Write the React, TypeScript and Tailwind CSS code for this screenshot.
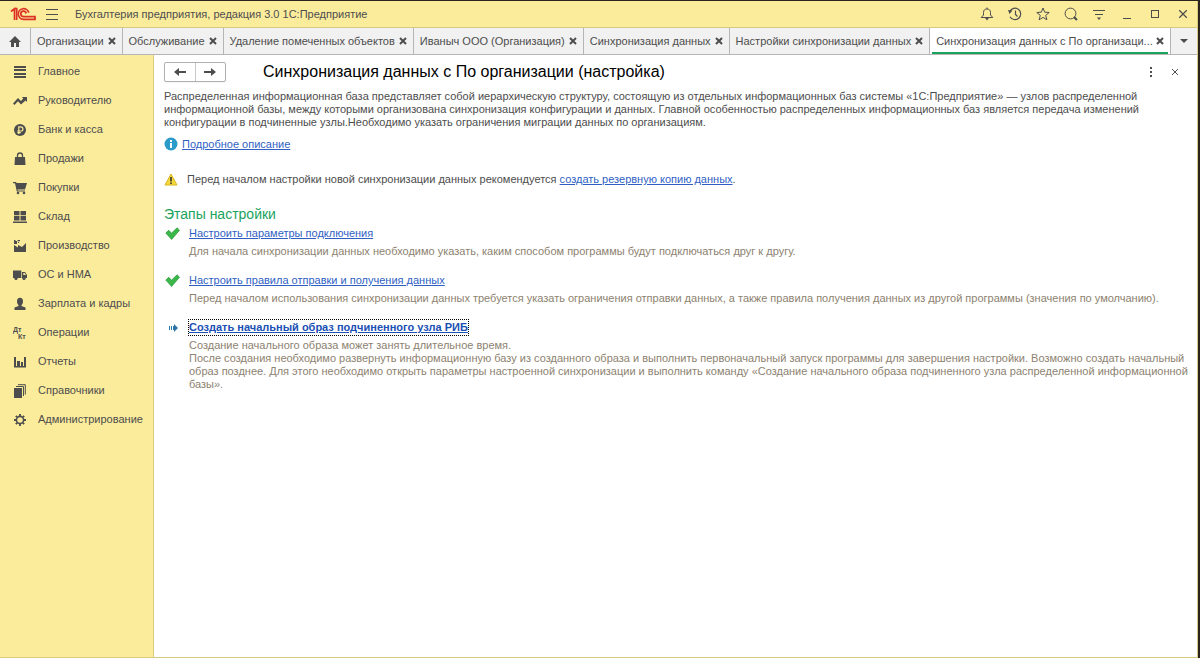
import type { ReactNode } from "react";

const TABS = [
  "Организации",
  "Обслуживание",
  "Удаление помеченных объектов",
  "Иваныч ООО (Организация)",
  "Синхронизация данных",
  "Настройки синхронизации данных",
];

type Section = { label: string; icon: ReactNode };

const SECTIONS: Section[] = [
  {
    label: "Главное",
    icon: <path d="M1 1h12v2H1zM1 4h12v2H1zM1 8h12v2H1zM1 11h12v2H1z" />,
  },
  {
    label: "Руководителю",
    icon: <path d="M0 9.500L5 4l3 3 2.200-2.500L9 3h5v5l-1.500-1.500L8 10.500l-3-3.200-3.500 3.700z" />,
  },
  {
    label: "Банк и касса",
    icon: (
      <>
        <circle cx="7" cy="7" r="6" />
        <path d="M5.800 11V3.800h2a2 2 0 010 4.200H4.300M4.300 9.600h3.500" fill="none" stroke="#fbec9c" strokeWidth="1.200" />
      </>
    ),
  },
  {
    label: "Продажи",
    icon: (
      <>
        <path d="M2 5h10l.5 8h-11z" />
        <path d="M4.500 6V3.500a2.500 2.500 0 015 0V6" fill="none" stroke="#4d4d4d" strokeWidth="1.300" />
      </>
    ),
  },
  {
    label: "Покупки",
    icon: (
      <>
        <path d="M0 1h3l.6 1H14l-2 6.500H4.500l.3 1H12v1H3.800L2 2.300H0z" />
        <circle cx="5" cy="12" r="1.300" />
        <circle cx="11" cy="12" r="1.300" />
      </>
    ),
  },
  {
    label: "Склад",
    icon: <path d="M1 1h5.500v4.200H1zM7.500 1H13v4.200H7.500zM1 6h5.500v4.500H1zM7.500 6H13v4.500H7.500zM0 11.500h14V13H0z" />,
  },
  {
    label: "Производство",
    icon: <path d="M1 13V6l4 2.500V6l4 2 4-4v9zM1 1h1.500v1H4v3H1zM4.500 1H7v1.200H4.500zM5 3h1v1H5z" />,
  },
  {
    label: "ОС и НМА",
    icon: (
      <>
        <path d="M0 2.500h8.300V10H0zM9 4h3l2 3v3H9z" />
        <path d="M10.300 5h1.400l1.200 2h-2.600z" fill="#fbec9c" />
        <circle cx="3" cy="10.500" r="1.600" />
        <circle cx="11" cy="10.500" r="1.600" />
      </>
    ),
  },
  {
    label: "Зарплата и кадры",
    icon: (
      <>
        <ellipse cx="7" cy="4.500" rx="3" ry="3.700" />
        <path d="M1.500 13v-2.500L5.500 9V7h3v2l4 1.500V13z" />
      </>
    ),
  },
  {
    label: "Операции",
    icon: (
      <g fontFamily="Liberation Sans, sans-serif" fontWeight="bold" fontSize="7">
        <text x="0" y="6">Дт</text>
        <text x="5" y="13">Кт</text>
      </g>
    ),
  },
  {
    label: "Отчеты",
    icon: <path d="M1 2h2v9H1zM4 6h3v5H4zM8 7h2v4H8zM11 2h2v9h-2zM1 11h12v1.500H1z" />,
  },
  {
    label: "Справочники",
    icon: (
      <>
        <path d="M1 4h8v10H1z" />
        <path d="M3 2.500h7.500V12M5 .7h7.300V10.500" fill="none" stroke="#4d4d4d" />
      </>
    ),
  },
  {
    label: "Администрирование",
    icon: (
      <>
        <circle cx="7" cy="7" r="3.600" fill="none" stroke="#4d4d4d" strokeWidth="1.600" />
        <path
          d="M7 1v2M7 11v2M1 7h2M11 7h2M2.800 2.800l1.400 1.400M9.800 9.800l1.400 1.400M2.800 11.200l1.400-1.400M9.800 4.200l1.400-1.400"
          stroke="#4d4d4d"
          strokeWidth="1.800"
        />
      </>
    ),
  },
];

const iconButton = "flex size-7 items-center justify-center";

function Cross({ size = 8, width = 2 }: { size?: number; width?: number }) {
  return (
    <svg width={size} height={size} viewBox="0 0 8 8" fill="none" stroke="currentColor" strokeWidth={width}>
      <path d="M1 1l6 6M7 1L1 7" />
    </svg>
  );
}

function TitleBar() {
  return (
    <header className="flex h-[27px] items-center border-b border-[#d8ca80] bg-[#fbec9c] pl-2.5">
      <svg width="26" height="14" viewBox="0 0 26 14" fill="none" stroke="#dc3226" strokeWidth="1.700" aria-label="1С">
        <path d="M1 4.500l3.500-2.700V13M4.500 1.500h2.200V13" />
        <path d="M18.800 5.800A5.300 5.300 0 1013.500 12.300H25V11" />
        <path d="M16.200 6.500A2.700 2.700 0 1013.500 9.600H25V12" />
      </svg>
      <button type="button" aria-label="Меню" className="ml-2.5 flex w-3 flex-col gap-1">
        <span className="h-px w-full bg-[#4d4d4d]" />
        <span className="h-px w-full bg-[#4d4d4d]" />
        <span className="h-px w-full bg-[#4d4d4d]" />
      </button>
      <h1 className="ml-[17px] text-[11px]">Бухгалтерия предприятия, редакция 3.0 1С:Предприятие</h1>
      <div className="ml-auto flex">
        <button type="button" aria-label="Уведомления" className={iconButton}>
          <svg width="14" height="14" viewBox="0 0 14 14" fill="none" stroke="currentColor">
            <path d="M1.200 10.500h11.600L10.500 8V5.500C10.500 3 9 2 7 2S3.500 3 3.500 5.500V8zM7 .5V2" />
            <path d="M5 11h4l-2 2.500z" fill="currentColor" stroke="none" />
          </svg>
        </button>
        <button type="button" aria-label="История" className={iconButton}>
          <svg width="14" height="14" viewBox="0 0 14 14" fill="none" stroke="currentColor" strokeWidth="1.200">
            <path d="M1.800 4.500A5.700 5.700 0 112 9.700M7.500 3.500v4l2 2" />
            <path d="M0 3l4.500.5L1.500 7z" fill="currentColor" stroke="none" />
          </svg>
        </button>
        <button type="button" aria-label="Избранное" className={iconButton}>
          <svg width="14" height="14" viewBox="0 0 14 14" fill="none" stroke="currentColor">
            <path d="M7 1l1.700 4.200 4.500.3-3.500 2.900 1.200 4.400L7 10.400l-3.900 2.400 1.200-4.400L.8 5.500l4.500-.3z" />
          </svg>
        </button>
        <button type="button" aria-label="Поиск" className={iconButton}>
          <svg width="14" height="14" viewBox="0 0 14 14" fill="none" stroke="currentColor">
            <circle cx="6.500" cy="6.500" r="5.400" />
            <path d="M10 10l3 3" strokeWidth="2.200" />
          </svg>
        </button>
        <button type="button" aria-label="Настройки" className={iconButton}>
          <svg width="14" height="14" viewBox="0 0 14 14" stroke="currentColor">
            <path d="M1 3.500h12M3 7.500h8" />
            <path d="M5 10.500h4l-2 2.500z" fill="currentColor" stroke="none" />
          </svg>
        </button>
        <button type="button" aria-label="Свернуть" className={iconButton}>
          <span className="mt-2 h-px w-2 bg-[#4d4d4d]" />
        </button>
        <button type="button" aria-label="Развернуть" className={iconButton}>
          <span className="size-2 border border-[#4d4d4d]" />
        </button>
        <button type="button" aria-label="Закрыть" className={iconButton}>
          <Cross size={10} width={1} />
        </button>
      </div>
    </header>
  );
}

function TabBar() {
  return (
    <nav className="flex h-[27px] border-b border-[#b5b5b5] bg-[#f1f1f1]">
      <button type="button" aria-label="Начальная страница" className="flex w-[30px] items-center justify-center">
        <svg width="12" height="11" viewBox="0 0 12 11" fill="currentColor">
          <path d="M6 0l6 6h-2v5H7V7H5v4H2V6H0z" />
        </svg>
      </button>
      {TABS.map((tab) => (
        <div key={tab} className="flex items-center gap-1 border-l border-[#b5b5b5] px-1.5">
          <a href="#" className="whitespace-nowrap">{tab}</a>
          <button type="button" aria-label="Закрыть вкладку">
            <Cross />
          </button>
        </div>
      ))}
      <div className="flex flex-1 border-x border-[#b5b5b5] bg-white px-0.5">
        <div className="flex flex-1 items-center justify-between border-b-2 border-[#1aa35c] px-1 pt-0.5">
          <a href="#" className="whitespace-nowrap">Синхронизация данных с По организаци...</a>
          <button type="button" aria-label="Закрыть вкладку">
            <Cross />
          </button>
        </div>
      </div>
      <button type="button" aria-label="Все вкладки" className="flex w-[26px] items-center justify-center">
        <svg width="8" height="4" viewBox="0 0 8 4" fill="currentColor">
          <path d="M0 0h8L4 4z" />
        </svg>
      </button>
    </nav>
  );
}

function Sidebar() {
  return (
    <aside className="w-[154px] shrink-0 border-r border-[#d8ca80] bg-[#fbec9c] pt-0.5">
      <ul>
        {SECTIONS.map((s) => (
          <li key={s.label}>
            <a href="#" className="flex h-[29px] items-center gap-[11px] pl-[13px]">
              <svg width="14" height="14" viewBox="0 0 14 14" fill="#4d4d4d" aria-hidden="true">
                {s.icon}
              </svg>
              {s.label}
            </a>
          </li>
        ))}
      </ul>
    </aside>
  );
}

function CheckIcon() {
  return (
    <svg width="15" height="13" viewBox="0 0 15 13">
      <path d="M.8 6l3-2.700 2.700 3L12 .8l2.500 2.400-7.900 9.200z" fill="#3cb84a" stroke="#2b9a3c" strokeWidth=".8" />
    </svg>
  );
}

function Step({ icon, title, current, children }: { icon: ReactNode; title: string; current?: boolean; children: ReactNode }) {
  return (
    <li className="flex">
      <span className="flex h-[15px] w-[25px] shrink-0 items-center pl-px">{icon}</span>
      <div className="min-w-0">
        <a
          href="#"
          className={
            current
              ? "block w-fit font-bold leading-[15px] text-[#1a4fb4] underline outline-1 outline-dotted outline-black"
              : "block w-fit leading-[15px] text-[#2f5fc4] underline"
          }
        >
          {title}
        </a>
        <div className="mt-1 text-[#8d8270]">{children}</div>
      </div>
    </li>
  );
}

function Content() {
  return (
    <main className="min-w-0 flex-1 pl-2.5">
      <div className="flex h-[33px] items-center">
        <div className="flex h-5 w-[62px] divide-x divide-[#c8c8c8] rounded-xs border border-[#b0b0b0] shadow-xs">
          <button type="button" aria-label="Назад" className="flex flex-1 items-center justify-center">
            <svg width="12" height="8" viewBox="0 0 12 8" fill="currentColor">
              <path d="M0 4l5-4v3h7v2H5v3z" />
            </svg>
          </button>
          <button type="button" aria-label="Вперед" className="flex flex-1 items-center justify-center">
            <svg width="12" height="8" viewBox="0 0 12 8" fill="currentColor">
              <path d="M12 4L7 0v3H0v2h7v3z" />
            </svg>
          </button>
        </div>
        <h2 className="ml-[37px] text-base text-black">Синхронизация данных с По организации (настройка)</h2>
        <button type="button" aria-label="Ещё" className="ml-auto flex w-6 justify-center">
          <svg width="4" height="10" viewBox="0 0 4 10" fill="currentColor">
            <path d="M1 0h2v2H1zM1 4h2v2H1zM1 8h2v2H1z" />
          </svg>
        </button>
        <button type="button" aria-label="Закрыть форму" className="mr-2.5 flex w-6 justify-center">
          <Cross size={8} width={1} />
        </button>
      </div>

      <p className="mt-0.5 max-w-[980px]">
        Распределенная информационная база представляет собой иерархическую структуру, состоящую из отдельных информационных баз системы «1С:Предприятие» — узлов распределенной информационной базы, между которыми организована синхронизация конфигурации и данных. Главной особенностью распределенных информационных баз является передача изменений конфигурации в подчиненные узлы.Необходимо указать ограничения миграции данных по организациям.
      </p>

      <div className="mt-2 flex items-center gap-1">
        <svg width="14" height="14" viewBox="0 0 14 14">
          <circle cx="7" cy="7" r="6.500" fill="#2b9cc9" />
          <path d="M6 3h2v2H6zM6 6h2v5H6z" fill="#fff" />
        </svg>
        <a href="#" className="text-[#2f5fc4] underline">Подробное описание</a>
      </div>

      <div className="mt-[22px] flex items-center gap-[9px]">
        <svg width="14" height="13" viewBox="0 0 14 13">
          <path d="M7 1l6 11H1z" fill="#f5d93c" stroke="#d9b520" strokeLinejoin="round" />
          <path d="M6.200 4h1.600v4.500H6.200zM6.200 9.500h1.600V11H6.200z" fill="#333" />
        </svg>
        <p>
          Перед началом настройки новой синхронизации данных рекомендуется{" "}
          <a href="#" className="text-[#2f5fc4] underline">создать резервную копию данных</a>.
        </p>
      </div>

      <h3 className="mt-5 text-sm leading-4 text-[#1aa35c]">Этапы настройки</h3>
      <ol className="mt-1 flex max-w-[1030px] flex-col gap-[15px]">
        <Step icon={<CheckIcon />} title="Настроить параметры подключения">
          Для начала синхронизации данных необходимо указать, каким способом программы будут подключаться друг к другу.
        </Step>
        <Step icon={<CheckIcon />} title="Настроить правила отправки и получения данных">
          Перед началом использования синхронизации данных требуется указать ограничения отправки данных, а также правила получения данных из другой программы (значения по умолчанию).
        </Step>
        <Step
          current
          title="Создать начальный образ подчиненного узла РИБ"
          icon={
            <svg width="9" height="8" viewBox="0 0 9 8" fill="#2e75a8" className="ml-1">
              <path d="M0 2h1v4H0zM2 2h1v4H2zM4 2h1V0l4 4-4 4V6H4z" />
            </svg>
          }
        >
          <p>Создание начального образа может занять длительное время.</p>
          <p>
            После создания необходимо развернуть информационную базу из созданного образа и выполнить первоначальный запуск программы для завершения настройки. Возможно создать начальный образ позднее. Для этого необходимо открыть параметры настроенной синхронизации и выполнить команду «Создание начального образа подчиненного узла распределенной информационной базы».
          </p>
        </Step>
      </ol>
    </main>
  );
}

export default function App() {
  return (
    <div className="min-h-screen bg-[#2a241c] pr-0.5 pt-px font-['Liberation_Sans',Arial,sans-serif] text-[11px] leading-[13px] text-[#4d4d4d]">
      <div className="flex min-h-[calc(100vh-1px)] flex-col border-b border-r border-[#d8ca80] bg-white">
        <TitleBar />
        <TabBar />
        <div className="flex flex-1">
          <Sidebar />
          <Content />
        </div>
      </div>
    </div>
  );
}
